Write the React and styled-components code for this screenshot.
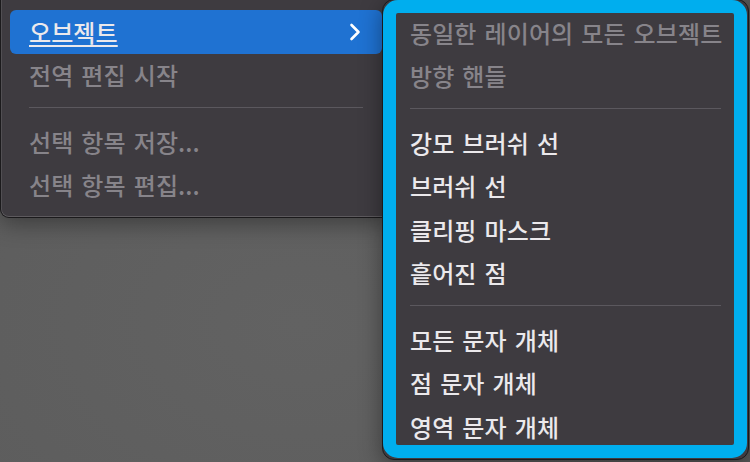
import React from "react";
import styled, { createGlobalStyle } from "styled-components";

const GlobalStyle = createGlobalStyle`
  html, body {
    margin: 0;
    padding: 0;
    width: 750px;
    height: 462px;
    overflow: hidden;
    background: #5f5f5f;
    font-family: "Noto Sans CJK KR", "Noto Sans", sans-serif;
  }
`;

const Page = styled.div`
  position: relative;
  width: 750px;
  height: 462px;
  background: radial-gradient(ellipse at 40% 70%, #626262 0%, #5d5d5d 60%, #565656 100%);
  overflow: hidden;
`;

const Menu = styled.div`
  width: 392px;
  box-sizing: border-box;
  padding: 10px 9px 10px 9px;
  background: #3e3b40;
  border: 1px solid #1b1a1c;
  border-top: none;
  border-radius: 0 0 9px 9px;
  box-shadow: inset 0 -1px 0 rgba(255, 255, 255, 0.16),
    inset 1px 0 0 rgba(255, 255, 255, 0.1), 0 6px 22px rgba(0, 0, 0, 0.35);
`;

const Row = styled.div`
  display: flex;
  align-items: center;
  justify-content: space-between;
  height: 43.5px;
  box-sizing: border-box;
  padding: 0 21px 0 19px;
  border-radius: 6px;
  font-size: 24px;
  font-weight: 500;
  letter-spacing: 0.1px;
  word-spacing: 2.5px;
  color: ${(p) => (p.$disabled ? "#87848a" : "#ebe9ec")};
  background: ${(p) => (p.$active ? "#1f72d2" : "transparent")};
  white-space: nowrap;
`;

const Label = styled.span`
  line-height: 1;
  text-decoration: ${(p) => (p.$underline ? "underline" : "none")};
  text-decoration-thickness: 1.5px;
  text-underline-offset: 3px;
`;

const Separator = styled.div`
  height: 23px;
  box-sizing: border-box;
  padding: 9.5px 19px 0;
  &::after {
    content: "";
    display: block;
    height: 1.5px;
    background: #5b585e;
  }
`;

const Submenu = styled.div`
  position: absolute;
  left: 382px;
  top: -1px;
  width: 367px;
  height: 461px;
  box-sizing: border-box;
  padding: 11px 15px 0 15px;
  background: #3e3b40;
  border: 1px solid #1b1a1c;
  border-radius: 12px;
  overflow: hidden;
  box-shadow: 0 6px 22px rgba(0, 0, 0, 0.4);
`;

const SubRow = styled(Row)`
  padding: 0 12px;
`;

const SubSeparator = styled(Separator)`
  padding: 9.5px 12px 0;
`;

const Frame = styled.div`
  position: absolute;
  left: 0;
  top: 0;
  right: 1px;
  bottom: 1px;
  border: 13px solid #00aeee;
  border-radius: 15px;
  pointer-events: none;
`;

const Chevron = () => (
  <svg width="12" height="18" viewBox="0 0 12 18">
    <polyline
      points="2.5,2 9.5,9 2.5,16"
      fill="none"
      stroke="#ffffff"
      strokeWidth="2.6"
      strokeLinecap="round"
      strokeLinejoin="round"
    />
  </svg>
);

const subItems = [
  { label: "동일한 레이어의 모든 오브젝트", disabled: true },
  { label: "방향 핸들", disabled: true },
  "sep",
  { label: "강모 브러쉬 선" },
  { label: "브러쉬 선" },
  { label: "클리핑 마스크" },
  { label: "흩어진 점" },
  "sep",
  { label: "모든 문자 개체" },
  { label: "점 문자 개체" },
  { label: "영역 문자 개체" },
];

export default function App() {
  return (
    <>
      <GlobalStyle />
      <Page>
        <Menu>
          <Row $active>
            <Label $underline>오브젝트</Label>
            <Chevron />
          </Row>
          <Row $disabled>
            <Label>전역 편집 시작</Label>
          </Row>
          <Separator />
          <Row $disabled>
            <Label>선택 항목 저장...</Label>
          </Row>
          <Row $disabled>
            <Label>선택 항목 편집...</Label>
          </Row>
        </Menu>
        <Submenu>
          {subItems.map((item, i) =>
            item === "sep" ? (
              <SubSeparator key={i} />
            ) : (
              <SubRow key={i} $disabled={item.disabled}>
                <Label>{item.label}</Label>
              </SubRow>
            )
          )}
          <Frame />
        </Submenu>
      </Page>
    </>
  );
}
